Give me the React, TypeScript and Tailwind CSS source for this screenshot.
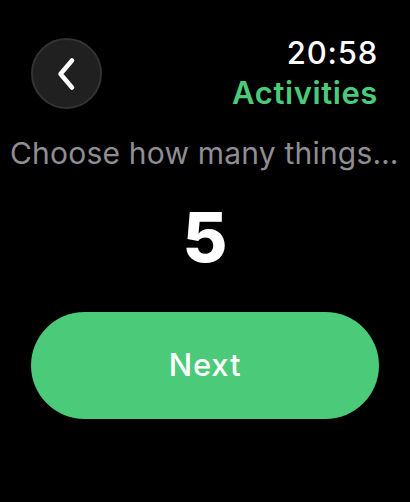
import React from "react";

function BackButton() {
  return (
    <button className="w-[71px] h-[71px] rounded-full bg-[#202020] border-2 border-[#333333] flex items-center justify-center">
      <svg width="22" height="34" viewBox="0 0 22 34" fill="none">
        <path d="M16 3.5 L4.5 17 L16 30.5" stroke="white" strokeWidth="4.5" strokeLinecap="round" strokeLinejoin="round" />
      </svg>
    </button>
  );
}

export default function App() {
  return (
    <div className="w-[410px] h-[502px] bg-black text-white overflow-hidden" style={{ fontFamily: "Inter, 'Noto Sans', sans-serif" }}>
      <div className="flex justify-between items-start pl-[31px] pr-[32px] pt-[38px]">
        <BackButton />
        <div className="flex flex-col items-end -mt-[3px]">
          <span className="text-[31px] leading-[36px] font-medium tracking-[0.8px]">20:58</span>
          <span className="text-[31px] leading-[36px] font-semibold text-[#4bca7a] mt-[4px] tracking-[0.6px]">Activities</span>
        </div>
      </div>
      <div className="mt-[25px] px-[10px] text-[30px] leading-[34px] tracking-[0.2px] text-[#8e8e93] whitespace-nowrap">Choose how many things…</div>
      <div className="mt-[32px] text-center text-[69px] leading-[70px] font-extrabold">5</div>
      <div className="px-[31px] mt-[40px]">
        <button className="w-full h-[107px] rounded-[54px] bg-[#4bca7a] text-white text-[31px] font-medium tracking-[0.8px]">Next</button>
      </div>
    </div>
  );
}
